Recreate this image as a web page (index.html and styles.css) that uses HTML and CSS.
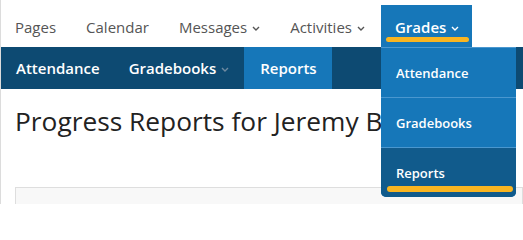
FILE: index.html
```html
<!DOCTYPE html>
<html>
<head>
<meta charset="utf-8">
<link rel="stylesheet" href="styles.css">
</head>
<body>
<div class="page">
  <nav class="topnav">
    <a class="top-item">Pages</a>
    <a class="top-item">Calendar</a>
    <a class="top-item">Messages <span class="chev"><svg width="8" height="5" viewBox="0 0 8 5"><path d="M1 1l3 3 3-3" fill="none" stroke="currentColor" stroke-width="1.4"/></svg></span></a>
    <a class="top-item">Activities <span class="chev"><svg width="8" height="5" viewBox="0 0 8 5"><path d="M1 1l3 3 3-3" fill="none" stroke="currentColor" stroke-width="1.4"/></svg></span></a>
    <div class="grades-wrap">
      <a class="top-item grades">Grades <span class="chev"><svg width="8" height="5" viewBox="0 0 8 5"><path d="M1 1l3 3 3-3" fill="none" stroke="currentColor" stroke-width="1.4"/></svg></span><span class="hl hl-tab"></span></a>
      <ul class="dropdown">
        <li class="dd-item">Attendance</li>
        <li class="dd-item">Gradebooks</li>
        <li class="dd-item dd-active">Reports<span class="hl hl-dd"></span></li>
      </ul>
    </div>
  </nav>
  <nav class="subnav">
    <a class="sub-item">Attendance</a>
    <a class="sub-item">Gradebooks <span class="chev dim"><svg width="8" height="5" viewBox="0 0 8 5"><path d="M1 1l3 3 3-3" fill="none" stroke="currentColor" stroke-width="1.4"/></svg></span></a>
    <a class="sub-item sub-active">Reports</a>
  </nav>
  <main class="content">
    <h1 class="title">Progress Reports for Jeremy Bolton</h1>
    <div class="panel"></div>
  </main>
</div>
</body>
</html>
```

FILE: styles.css
```css
html, body {
  margin: 0;
  padding: 0;
  background: #fff;
  font-family: "Open Sans", "Noto Sans", sans-serif;
  overflow: hidden;
}
.page {
  width: 523px;
  height: 204px;
  border-left: 1px solid #dcdcdc;
  box-sizing: border-box;
  overflow: hidden;
}
.topnav {
  display: flex;
  align-items: stretch;
  height: 42px;
  padding-top: 5px;
  padding-left: 14px;
}
.top-item {
  display: flex;
  align-items: center;
  font-size: 15px;
  color: #555;
  margin-right: 30px;
  padding-top: 2px;
  white-space: nowrap;
}
.chev {
  display: inline-flex;
  margin-left: 5px;
  margin-top: 3px;
}
.grades-wrap {
  position: relative;
  margin-left: -14px;
}
.top-item.grades {
  position: relative;
  background: #1677b9;
  color: #fff;
  font-weight: 600;
  height: 100%;
  box-sizing: border-box;
  padding: 2px 13px 0 14px;
  margin-right: 0;
}
.hl {
  position: absolute;
  background: #f9b521;
  border-radius: 3px;
  height: 5px;
}
.hl-tab {
  left: 5px;
  right: 3px;
  top: 32px;
}
.dropdown {
  position: absolute;
  top: 42px;
  left: 0;
  width: 135px;
  margin: 0;
  padding: 0;
  list-style: none;
  background: #1677b9;
  border-top: 1px solid #4a97cf;
  border-radius: 0 0 5px 5px;
  overflow: hidden;
  z-index: 2;
}
.dd-item {
  position: relative;
  height: 49px;
  display: flex;
  align-items: center;
  padding-left: 15px;
  color: #fff;
  font-size: 13px;
  font-weight: 600;
  border-bottom: 1px solid #4a97cf;
}
.dd-item.dd-active {
  background: #115b8c;
  border-bottom: none;
}
.hl-dd {
  left: 6px;
  right: 3px;
  bottom: 5px;
  height: 6px;
}
.subnav {
  display: flex;
  height: 42px;
  background: #0d4a72;
  padding-left: 15px;
}
.sub-item {
  display: flex;
  align-items: center;
  color: #fff;
  font-size: 15px;
  font-weight: 600;
  margin-right: 29px;
}
.chev.dim {
  color: #6f8aa0;
}
.sub-item.sub-active {
  background: #1677b9;
  padding: 0 15px 0 16px;
  margin-left: -14px;
}
.content {
  padding: 0 0 0 14px;
}
.title {
  margin: 14px 0 0 0;
  font-size: 26.3px;
  font-weight: 400;
  color: #222;
  line-height: 36px;
  white-space: nowrap;
}
.panel {
  margin-top: 48px;
  height: 40px;
  border: 1px solid #dedede;
  background: #f8f8f8;
}
```
